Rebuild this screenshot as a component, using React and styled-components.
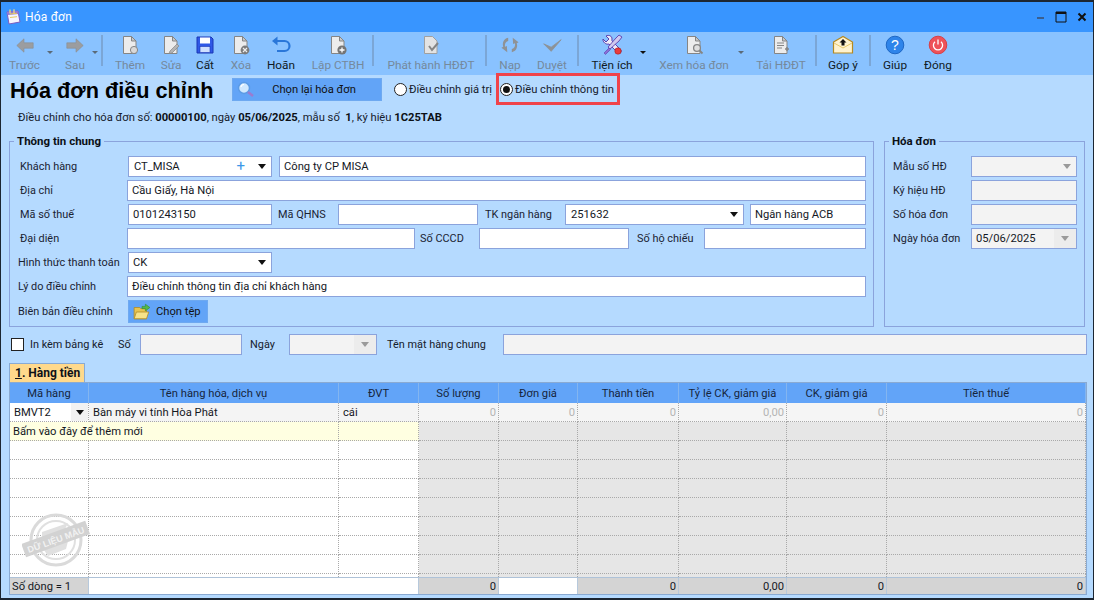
import React from "react";
import styled, { createGlobalStyle } from "styled-components";

const Global = createGlobalStyle`
  html, body { margin: 0; padding: 0; background: #b5daff; }
  * { box-sizing: border-box; }
`;

const Win = styled.div`
  width: 1094px; height: 600px; overflow: hidden;
  display: flex; flex-direction: column;
  border: 1px solid #1c2632; border-top-width: 2px; border-bottom-width: 2px;
  background: #b5daff;
  font-family: Roboto, "Liberation Sans", Arial, sans-serif; font-size: 11.2px; color: #16202c;
`;
const TitleBar = styled.div`
  height: 30px; flex: none; background: #3895ff; color: #fff;
  display: flex; align-items: center; padding: 0 5px 0 3px; gap: 3px; font-size: 12px;
`;
const TitleText = styled.span` flex: 1; letter-spacing: .2px; `;
const WinButtons = styled.div` display: flex; align-items: center; gap: 9px; `;
const Toolbar = styled.div`
  height: 43px; flex: none; background: #89c2ff; display: flex; align-items: stretch; padding-left: 3px;
`;
const ToolItem = styled.div`
  width: ${p => p.$w}px; margin-left: ${p => p.$ml || 0}px; flex: none;
  display: flex; flex-direction: column; align-items: center; justify-content: flex-start;
  padding-top: 3px; white-space: nowrap;
  color: ${p => (p.$off ? "#75899c" : "#111a24")};
`;
const ToolIcon = styled.div` height: 20px; width: 22px; display: flex; align-items: center; justify-content: center; `;
const ToolLabel = styled.div` margin-top: 3px; line-height: 14px; font-size: 11.8px; `;
const ToolCaret = styled.div`
  width: ${p => p.$w}px; margin-left: ${p => p.$ml || 0}px; flex: none; padding-top: 19px;
  display: flex; justify-content: center;
  &::after { content: ""; height: 0; border: 3px solid transparent; border-bottom: 0; border-top-color: ${p => (p.$off ? "#5b6a78" : "#111")}; }
`;
const ToolSep = styled.div`
  width: 6px; margin-left: ${p => p.$ml || 0}px; flex: none; display: flex; justify-content: center; padding: 3px 0 9px;
  &::after { content: ""; width: 2px; background: #7ba6d6; }
`;
const Content = styled.div`
  flex: 1; min-height: 0; display: flex; flex-direction: column; padding: 0 6px 0 8px;
`;
const HeadRow = styled.div`
  height: 32px; margin-top: -2px; flex: none; display: flex; align-items: center; position: relative;
`;
const PageTitle = styled.h1`
  margin: 4px 0 0 1px; width: 222px; flex: none; font-family: "Liberation Sans", Arial, sans-serif;
  font-size: 21.7px; line-height: 26px; font-weight: 700; color: #000; white-space: nowrap;
`;
const PickButton = styled.div`
  width: 150px; height: 23px; flex: none; margin-top: 1px; background: #62a4f7; border: 1px solid #6ea9f0;
  display: flex; align-items: center; padding-left: 3px; color: #111;
`;
const PickLabel = styled.span` flex: 1; text-align: center; padding-right: 9px; `;
const RadioWrap = styled.div`
  display: flex; align-items: center; gap: 2px; flex: none; white-space: nowrap;
  margin-left: ${p => p.$ml || 0}px; height: 32px; width: ${p => p.$w}px; padding-top: 1px;
  border: ${p => (p.$mark ? "3px solid #f0434a" : "none")};
  padding-left: ${p => (p.$mark ? "1px" : "0")};
`;
const RadioDot = styled.span`
  width: 13px; height: 13px; border-radius: 50%; background: #fff; border: 1px solid #222; flex: none;
  display: flex; align-items: center; justify-content: center;
  &::after { content: ""; width: 7px; height: 7px; border-radius: 50%; background: ${p => (p.$on ? "#111" : "transparent")}; }
`;
const InfoRow = styled.div`
  height: 24px; flex: none; padding-left: 9px; display: flex; align-items: center; white-space: pre;
`;
const Strong = styled.b` font-weight: 700; color: #0c1016; `;
const GroupsRow = styled.div`
  display: flex; gap: 10px; margin-top: 5px; height: 193px; flex: none; padding-right: 2px;
`;
const Group = styled.fieldset`
  margin: 0; min-width: 0; border: 1px solid #8ba3dc; padding: 8px 7px 0 8px;
  width: ${p => (p.$w ? p.$w + "px" : "auto")}; flex: ${p => (p.$w ? "none" : "1")};
  display: flex; flex-direction: column; gap: 3px;
`;
const GroupTitle = styled.legend`
  margin-left: -4px; padding: 0 3px; height: 14px; line-height: 14px; font-size: 11.5px; font-weight: 700; color: #0b1016;
`;
const FormRow = styled.div` display: flex; align-items: center; height: 21px; flex: none; `;
const FieldLabel = styled.div`
  width: ${p => p.$w}px; flex: none; padding-left: ${p => p.$pl || 0}px; white-space: nowrap; color: #1a2333; font-size: 10.9px;
`;
const Field = styled.div`
  height: 21px; flex: ${p => (p.$w ? "none" : "1")}; width: ${p => (p.$w ? p.$w + "px" : "auto")};
  margin-left: ${p => p.$ml || 0}px; min-width: 0;
  background: ${p => (p.$off ? "#f3f3f3" : "#fff")}; border: 1px solid #8ba3dc;
  display: flex; align-items: center; padding-left: ${p => p.$pl ?? 4}px; color: #14181f; white-space: nowrap;
`;
const FieldValue = styled.span` flex: 1; `;
const Plus = styled.span` color: #3c97e8; font-size: 15px; line-height: 15px; margin-right: 13px; `;
const Caret = styled.span`
  width: 0; height: 0; flex: none; margin-right: ${p => p.$mr ?? 5}px;
  border: 4px solid transparent; border-bottom: 0; border-top: 5px solid ${p => (p.$off ? "#9a9a9a" : "#111")};
`;
const CaretStrip = styled.span`
  width: ${p => p.$w || 22}px; align-self: stretch; background: ${p => p.$bg || "#ececec"}; display: flex; align-items: center; justify-content: center; flex: none;
`;
const FileButton = styled.div`
  width: 80px; height: 23px; flex: none; background: #62a4f7; border: 1px solid #6ea9f0;
  display: flex; align-items: center; gap: 5px; padding-left: 4px; color: #111;
`;
const FileRow = styled(FormRow)` height: 23px; `;
const OptionRow = styled.div` display: flex; align-items: center; height: 21px; margin-top: 7px; flex: none; `;
const CheckBox = styled.span`
  width: 13px; height: 13px; background: #fff; border: 1px solid #222; flex: none; margin-left: 2px; margin-right: 6px;
`;
const OptLabel = styled.span` white-space: nowrap; width: ${p => p.$w}px; flex: none; margin-left: ${p => p.$ml || 0}px; font-size: 10.9px; `;
const TabRow = styled.div` margin-top: 8px; height: 19px; flex: none; display: flex; `;
const Tab = styled.div`
  width: 76px; height: 19px; background: #ffd98c; border: 1px solid #88aad4; border-bottom: none;
  display: flex; align-items: center; padding-left: 5px; font-size: 12px; font-weight: 700; color: #0e1218;
`;
const TabKey = styled.span` text-decoration: underline; `;
const Table = styled.div`
  position: relative; height: 213px; flex: none; border: 1px solid #8aaad2; background: #e6e6e6;
  display: flex; flex-direction: column;
`;
const cols = "79px 250px 80px 80px 79px 101px 108px 100px 1fr";
const Header = styled.div`
  display: grid; grid-template-columns: ${cols}; height: 20px; flex: none; background: #62a4f8;
`;
const HeadCell = styled.div`
  display: flex; align-items: center; justify-content: center; color: #16263d; white-space: nowrap;
  border-right: 1px solid #83b5f0;
`;
const Body = styled.div` flex: 1; min-height: 0; overflow: hidden; `;
const Row = styled.div` display: grid; grid-template-columns: ${cols}; height: 19px; `;
const Cell = styled.div`
  border-right: 1px dotted #a9a9a9; border-bottom: 1px dotted #a9a9a9;
  background: ${p => p.$bg}; color: ${p => p.$color || "#14181f"};
  display: flex; align-items: center; white-space: nowrap; min-width: 0;
  justify-content: ${p => (p.$end ? "flex-end" : "flex-start")};
  padding: ${p => (p.$end ? "0 2px 0 0" : `0 0 0 ${p.$pl ?? 4}px`)};
  grid-column: ${p => p.$span || "auto"};
`;
const CellText = styled.span` flex: 1; `;
const Footer = styled.div`
  display: grid; grid-template-columns: ${cols}; height: 17px; flex: none; border-top: 1px solid #aec2d8; background: #d4d4d4;
`;
const FootCell = styled.div`
  background: ${p => (p.$white ? "#fff" : "#d4d4d4")}; border-right: 1px solid #b7c9dc;
  display: flex; align-items: center; white-space: nowrap;
  justify-content: ${p => (p.$end ? "flex-end" : "flex-start")};
  padding: ${p => (p.$end ? "0 2px 0 0" : "0 0 0 2px")}; color: #14181f;
  grid-column: ${p => p.$span || "auto"};
`;
const Stamp = styled.svg` position: absolute; left: 12px; top: 129px; `;
const StampText = styled.text` font-family: "Liberation Sans", Arial, sans-serif; font-size: 9px; font-weight: 700; fill: #f1f1f1; `;

const G = "#a0a0a0", GD = "#858585";
const Doc = ({ children, lines }) => (
  <svg width="20" height="20" viewBox="0 0 20 20">
    <path d="M3.5 1.500h8l4.500 4.500v12.500h-12.500z" fill="#ececec" stroke={GD} />
    <path d="M11.500 1.500v4.500h4.500z" fill="#c9c9c9" stroke={GD} />
    {lines && <path d="M6 8h7M6 10.500h7M6 13h5" stroke={GD} />}
    {children}
  </svg>
);
const icons = {
  left: <svg width="18" height="15" viewBox="0 0 18 15"><path d="M.8 7.500L8 .8v4h9.200v5.400H8v4z" fill="#9b9da0" stroke="#8a8d90" strokeWidth=".6" /></svg>,
  right: <svg width="18" height="15" viewBox="0 0 18 15"><path d="M17.200 7.500L10 .8v4H.8v5.400H10v4z" fill="#9b9da0" stroke="#8a8d90" strokeWidth=".6" /></svg>,
  add: <Doc><circle cx="14" cy="15" r="3.600" fill="#d9d9d9" stroke={GD} /></Doc>,
  edit: <Doc lines={false}><path d="M9 16l7-7 2 2-7 7-3 .6z" fill="#b5b5b5" stroke={GD} strokeWidth=".7" /></Doc>,
  save: <svg width="20" height="20" viewBox="0 0 20 20"><path d="M2 2h14l2 2v14H2z" fill="#2f58e6" stroke="#1a37b4" /><rect x="5" y="2.500" width="10" height="6" fill="#fff" /><rect x="5" y="11.500" width="10" height="6" fill="#cfe0ff" stroke="#1a37b4" strokeWidth=".6" /></svg>,
  del: <Doc><circle cx="14" cy="15" r="4.400" fill="#7c7c7c" /><path d="M12 13l4 4M16 13l-4 4" stroke="#eee" strokeWidth="1.200" /></Doc>,
  undo: <svg width="22" height="20" viewBox="0 0 22 20"><path d="M6 6h8.500a4.500 4.500 0 0 1 0 10H7" fill="none" stroke="#2a77d9" strokeWidth="2.200" /><path d="M7.500 1.500L2 6l5.500 4.500z" fill="#2a77d9" /></svg>,
  plus: <Doc><circle cx="14" cy="15" r="4.600" fill="#757575" /><path d="M11.500 15h5M14 12.500v5" stroke="#fff" strokeWidth="1.300" /></Doc>,
  publish: <svg width="20" height="20" viewBox="0 0 20 20"><path d="M3.500 1.500h8l4.500 4.500v12.500h-12.500z" fill="#e3e3e3" stroke={G} /><path d="M8 11l3 4 6-7" fill="none" stroke={GD} strokeWidth="2" /></svg>,
  reload: <svg width="20" height="18" viewBox="0 0 22 20"><path d="M9 2C4.500 2.500 2 7.500 3.500 12L1.500 13l6.500 5-.5-7-2 1C4.800 8.500 6.500 6 9 5.500zM13 18c4.500-.5 7-5.500 5.500-10l2-1-6.500-5 .5 7 2-1c.7 3.500-1 6-3.500 6.500z" fill="#8f9295" /></svg>,
  check: <svg width="20" height="17" viewBox="0 0 24 20"><path d="M2 8l9 9L23 3l-12 9z" fill="#8d9296" stroke="#8d9296" /></svg>,
  tools: <svg width="22" height="22" viewBox="0 0 22 22"><path d="M2 5l3 3 3-3-3-3c3-1.500 6 0 6 3 0 1-.2 1.500 0 2l9 9c1 2-1 4-3 3l-9-9c-3 1-6.500-2-6-5z" fill="#ecebf8" stroke="#5c3fb0" /><path d="M18 1l3 2-3 4-9 8-2-2 8-9z" fill="#cfc9ee" stroke="#5c3fb0" strokeWidth=".9" /><path d="M8 14l-5 5 1.500 1.500 5-5z" fill="#8a6dd4" stroke="#5c3fb0" strokeWidth=".6" /><circle cx="17" cy="17" r="3.200" fill="#e83c3c" stroke="#a81f1f" strokeWidth=".6" /></svg>,
  view: <Doc><circle cx="13" cy="13" r="3.400" fill="#dfdfdf" stroke={GD} strokeWidth="1.300" /><path d="M15.500 15.500l3 3" stroke={GD} strokeWidth="1.800" /></Doc>,
  download: <Doc lines><path d="M14 14h4M16 12v4" stroke={GD} strokeWidth="1.500" /></Doc>,
  mail: <svg width="22" height="20" viewBox="0 0 22 20"><path d="M1.500 7L11 1.500 20.500 7v11h-19z" fill="#fff3cf" stroke="#b58a22" strokeWidth="1.200" /><path d="M2 8l9 5 9-5" fill="none" stroke="#e8c96a" /><path d="M11 4l3.500 3.500h-2v3h-3v-3h-2z" fill="#111" /></svg>,
  help: <svg width="20" height="20" viewBox="0 0 20 20"><circle cx="10" cy="10" r="8.800" fill="#2e84ea" stroke="#1e67c4" /><text x="10" y="15" textAnchor="middle" fontSize="14" fontFamily="Liberation Sans" fill="#fff">?</text></svg>,
  power: <svg width="20" height="20" viewBox="0 0 20 20"><circle cx="10" cy="10" r="8.800" fill="#ee5259" stroke="#d73f47" /><path d="M7 6.800a4.600 4.600 0 1 0 6 0" fill="none" stroke="#fff" strokeWidth="1.300" /><path d="M10 4.500v5" stroke="#fff" strokeWidth="1.300" /></svg>,
};

const tools = [
  { t: "item", l: "Trước", i: "left", w: 41, off: 1 },
  { t: "caret", w: 10, off: 1 },
  { t: "item", l: "Sau", i: "right", w: 32, ml: 4, off: 1 },
  { t: "caret", w: 8, off: 1 },
  { t: "sep" },
  { t: "item", l: "Thêm", i: "add", w: 50, off: 1 },
  { t: "item", l: "Sửa", i: "edit", w: 26, ml: 3, off: 1 },
  { t: "item", l: "Cất", i: "save", w: 42 },
  { t: "item", l: "Xóa", i: "del", w: 30, off: 1 },
  { t: "item", l: "Hoãn", i: "undo", w: 50 },
  { t: "item", l: "Lập CTBH", i: "plus", w: 64, off: 1 },
  { t: "sep" },
  { t: "item", l: "Phát hành HĐĐT", i: "publish", w: 104, ml: 3, off: 1 },
  { t: "sep" },
  { t: "item", l: "Nạp", i: "reload", w: 42, off: 1 },
  { t: "item", l: "Duyệt", i: "check", w: 42, off: 1 },
  { t: "sep", ml: 2 },
  { t: "item", l: "Tiện ích", i: "tools", w: 58, ml: 2 },
  { t: "caret", w: 8, ml: -2 },
  { t: "item", l: "Xem hóa đơn", i: "view", w: 86, ml: 4, off: 1 },
  { t: "caret", w: 8, off: 1 },
  { t: "item", l: "Tải HĐĐT", i: "download", w: 64, ml: 4, off: 1 },
  { t: "sep" },
  { t: "item", l: "Góp ý", i: "mail", w: 48 },
  { t: "sep" },
  { t: "item", l: "Giúp", i: "help", w: 44 },
  { t: "item", l: "Đóng", i: "power", w: 42 },
];

const heads = ["Mã hàng", "Tên hàng hóa, dịch vụ", "ĐVT", "Số lượng", "Đơn giá", "Thành tiền", "Tỷ lệ CK, giảm giá", "CK, giảm giá", "Tiền thuế"];
const rowOneValues = ["0", "0", "0", "0,00", "0", "0"];
const footValues = ["0", null, "0", "0,00", "0", "0"];
const GREY = "#e6e6e6";

function EmptyRow({ i }) {
  return (
    <Row>
      {heads.map((h, c) => <Cell key={h + i} $bg={c < 3 ? "#fff" : GREY} />)}
    </Row>
  );
}

export default function App() {
  return (
    <>
      <Global />
      <Win>
        <TitleBar>
          <svg width="18" height="18" viewBox="0 0 18 18">
            <path d="M3 4l11-1 2 11-11 2z" fill="#f5f5ff" stroke="#7a5cc0" />
            <path d="M3 4l11-1 .6 3-11 1z" fill="#8f7ad8" />
            <path d="M6 6l7-.8M6 9.500l7-.8" stroke="#e7c95a" />
            <path d="M6 1.500v4M10 1.200v4" stroke="#e9d38a" strokeWidth="1.400" />
          </svg>
          <TitleText>Hóa đơn</TitleText>
          <WinButtons>
            <svg width="12" height="12" viewBox="0 0 12 12"><rect x="3" y="6" width="7" height="2" fill="#3a5f8f" /></svg>
            <svg width="12" height="12" viewBox="0 0 12 12"><path d="M1 1h10v10H1z" fill="none" stroke="#111" /><rect x="1" y="1" width="10" height="2" fill="#111" /></svg>
            <svg width="12" height="12" viewBox="0 0 12 12"><path d="M2.500 2.500l7 7M9.500 2.500l-7 7" stroke="#111" strokeWidth="2" /></svg>
          </WinButtons>
        </TitleBar>
        <Toolbar>
          {tools.map((x, i) => {
            if (x.t === "sep") return <ToolSep key={i} $ml={x.ml} />;
            if (x.t === "caret") return <ToolCaret key={i} $w={x.w} $ml={x.ml} $off={x.off} />;
            return (
              <ToolItem key={i} $w={x.w} $ml={x.ml} $off={x.off}>
                <ToolIcon>{icons[x.i]}</ToolIcon>
                <ToolLabel>{x.l}</ToolLabel>
              </ToolItem>
            );
          })}
        </Toolbar>
        <Content>
          <HeadRow>
            <PageTitle>Hóa đơn điều chỉnh</PageTitle>
            <PickButton>
              <svg width="20" height="20" viewBox="0 0 20 20">
                <circle cx="8" cy="8" r="5.500" fill="#cfe8ff" stroke="#5b9be6" strokeWidth="1.500" />
                <path d="M5 7a3 3 0 0 1 3-2.500" fill="none" stroke="#fff" strokeWidth="1.200" />
                <path d="M12 12l5 4" stroke="#9a7bd0" strokeWidth="2.500" />
              </svg>
              <PickLabel>Chọn lại hóa đơn</PickLabel>
            </PickButton>
            <RadioWrap $ml={12} $w={102}><RadioDot />Điều chỉnh giá trị</RadioWrap>
            <RadioWrap $mark $w={124}><RadioDot $on />Điều chỉnh thông tin</RadioWrap>
          </HeadRow>
          <InfoRow>
            Điều chỉnh cho hóa đơn số: <Strong>00000100</Strong>, ngày <Strong>05/06/2025</Strong>, mẫu số  <Strong>1</Strong>, ký hiệu <Strong>1C25TAB</Strong>
          </InfoRow>
          <GroupsRow>
            <Group>
              <GroupTitle>Thông tin chung</GroupTitle>
              <FormRow>
                <FieldLabel $w={110} $pl={2}>Khách hàng</FieldLabel>
                <Field $w={144} $pl={5}><FieldValue>CT_MISA</FieldValue><Plus>+</Plus><Caret /></Field>
                <Field $ml={7}>Công ty CP MISA</Field>
              </FormRow>
              <FormRow>
                <FieldLabel $w={109} $pl={2}>Địa chỉ</FieldLabel>
                <Field>Cầu Giấy, Hà Nội</Field>
              </FormRow>
              <FormRow>
                <FieldLabel $w={110} $pl={2}>Mã số thuế</FieldLabel>
                <Field $w={144}>0101243150</Field>
                <FieldLabel $w={66} $pl={6}>Mã QHNS</FieldLabel>
                <Field $w={140} />
                <FieldLabel $w={87} $pl={7}>TK ngân hàng</FieldLabel>
                <Field $w={179} $pl={5}><FieldValue>251632</FieldValue><Caret /></Field>
                <Field $ml={6}>Ngân hàng ACB</Field>
              </FormRow>
              <FormRow>
                <FieldLabel $w={109} $pl={2}>Đại diện</FieldLabel>
                <Field $w={288} />
                <FieldLabel $w={64} $pl={5}>Số CCCD</FieldLabel>
                <Field $w={150} />
                <FieldLabel $w={75} $pl={8}>Số hộ chiếu</FieldLabel>
                <Field />
              </FormRow>
              <FormRow>
                <FieldLabel $w={110}>Hình thức thanh toán</FieldLabel>
                <Field $w={144}><FieldValue>CK</FieldValue><Caret /></Field>
              </FormRow>
              <FormRow>
                <FieldLabel $w={109}>Lý do điều chỉnh</FieldLabel>
                <Field>Điều chỉnh thông tin địa chỉ khách hàng</Field>
              </FormRow>
              <FileRow>
                <FieldLabel $w={110}>Biên bản điều chỉnh</FieldLabel>
                <FileButton>
                  <svg width="18" height="18" viewBox="0 0 16 16">
                    <path d="M1 4h5l1 1h5v9H1z" fill="#e9c44f" stroke="#b08a25" strokeWidth=".7" />
                    <path d="M3 8h11l-2 6H1z" fill="#f7e289" stroke="#b08a25" strokeWidth=".7" />
                    <path d="M8 3h3V1l4 3-4 3V5H8z" fill="#55b948" stroke="#2e8a2a" strokeWidth=".5" />
                  </svg>
                  Chọn tệp
                </FileButton>
              </FileRow>
            </Group>
            <Group $w={201}>
              <GroupTitle>Hóa đơn</GroupTitle>
              <FormRow>
                <FieldLabel $w={78}>Mẫu số HĐ</FieldLabel>
                <Field $off><FieldValue /><Caret $off /></Field>
              </FormRow>
              <FormRow>
                <FieldLabel $w={78}>Ký hiệu HĐ</FieldLabel>
                <Field $off />
              </FormRow>
              <FormRow>
                <FieldLabel $w={78}>Số hóa đơn</FieldLabel>
                <Field $off />
              </FormRow>
              <FormRow>
                <FieldLabel $w={78}>Ngày hóa đơn</FieldLabel>
                <Field $off><FieldValue>05/06/2025</FieldValue><CaretStrip><Caret $off $mr={0} /></CaretStrip></Field>
              </FormRow>
            </Group>
          </GroupsRow>
          <OptionRow>
            <CheckBox />
            <OptLabel $w={88}>In kèm bảng kê</OptLabel>
            <OptLabel $w={22}>Số</OptLabel>
            <Field $off $w={102} />
            <OptLabel $w={39} $ml={8}>Ngày</OptLabel>
            <Field $off $w={88}><FieldValue /><CaretStrip><Caret $off $mr={0} /></CaretStrip></Field>
            <OptLabel $w={116} $ml={10}>Tên mặt hàng chung</OptLabel>
            <Field $off />
          </OptionRow>
          <TabRow>
            <Tab><TabKey>1</TabKey>. Hàng tiền</Tab>
          </TabRow>
          <Table>
            <Header>
              {heads.map(h => <HeadCell key={h}>{h}</HeadCell>)}
            </Header>
            <Body>
              <Row>
                <Cell $bg="#fff"><CellText>BMVT2</CellText><CaretStrip $w={17} $bg="#f2f2f2"><Caret $mr={0} /></CaretStrip></Cell>
                <Cell $bg="#f4f4f4">Bàn máy vi tính Hòa Phát</Cell>
                <Cell $bg="#f4f4f4">cái</Cell>
                {rowOneValues.map((v, i) => <Cell key={i} $bg="#f5f5f5" $end $color="#b4b4b4">{v}</Cell>)}
              </Row>
              <Row>
                <Cell $bg="#ffffe1" $span="span 2" $pl={3}>Bấm vào đây để thêm mới</Cell>
                <Cell $bg="#ffffe1" />
                {rowOneValues.map((v, i) => <Cell key={i} $bg={GREY} />)}
              </Row>
              {[0, 1, 2, 3, 4, 5, 6, 7].map(i => <EmptyRow key={i} i={i} />)}
            </Body>
            <Footer>
              <FootCell>Số dòng = 1</FootCell>
              <FootCell $white $span="span 2" />
              {footValues.map((v, i) => <FootCell key={i} $end $white={v === null}>{v}</FootCell>)}
            </Footer>
            <Stamp width="68" height="56" viewBox="0 0 68 56">
              <circle cx="34" cy="28" r="25" fill="none" stroke="#dadada" strokeWidth="3" />
              <circle cx="34" cy="28" r="19" fill="none" stroke="#e0e0e0" strokeWidth="2" />
              <path d="M20 20l26-9-4 8-22 7zM22 38l24-9-2 8-18 7z" fill="#e0e0e0" />
              <g transform="rotate(-20 34 28)">
                <rect x="0" y="20" width="68" height="14" fill="#d2d2d2" />
                <StampText x="34" y="31" textAnchor="middle">DỮ LIỆU MẪU</StampText>
              </g>
            </Stamp>
          </Table>
        </Content>
      </Win>
    </>
  );
}
